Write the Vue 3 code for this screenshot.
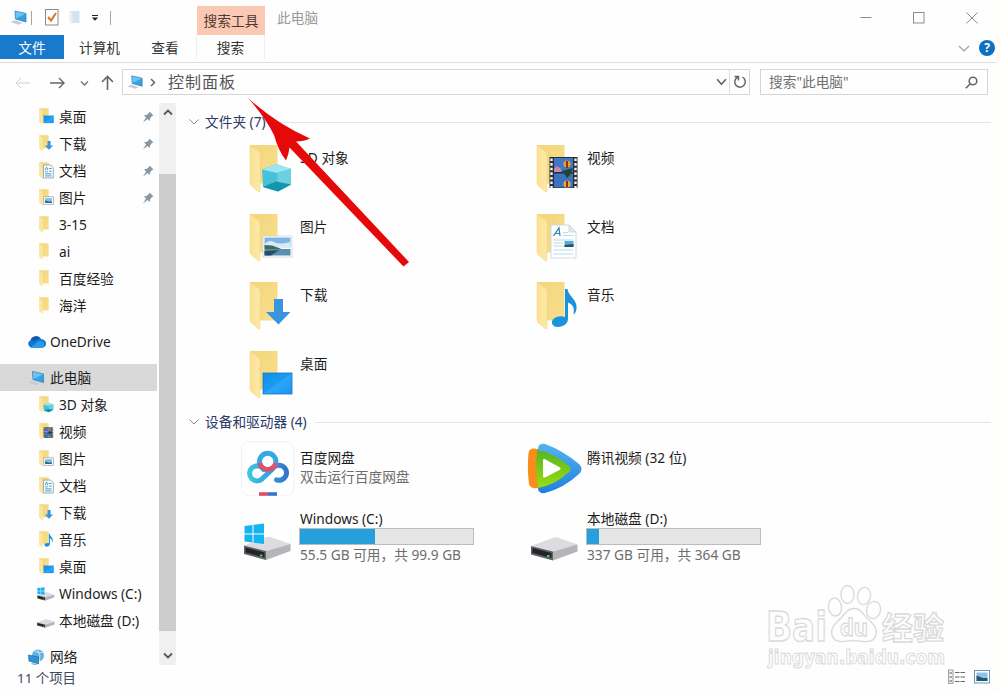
<template>
  <div class="explorer">
    <svg class="sprite" width="0" height="0">
      <defs>
        <linearGradient id="gFolder" x1="0" y1="0" x2="1" y2="1">
          <stop offset="0" stop-color="#f3d57c" />
          <stop offset="1" stop-color="#f8df8c" />
        </linearGradient>
        <linearGradient id="gFlap" x1="0" y1="0" x2="1" y2="0">
          <stop offset="0" stop-color="#fbe18f" />
          <stop offset="1" stop-color="#fdeaa9" />
        </linearGradient>
        <linearGradient id="gScreen" x1="0" y1="0" x2="1" y2="1">
          <stop offset="0" stop-color="#0f8fea" />
          <stop offset="0.5" stop-color="#1c9bf3" />
          <stop offset="0.52" stop-color="#2ba8fb" />
          <stop offset="1" stop-color="#1894f0" />
        </linearGradient>
        <linearGradient id="gDisk" gradientUnits="userSpaceOnUse" x1="9" y1="0" x2="45" y2="0">
          <stop offset="0" stop-color="#3fc4e2" />
          <stop offset="0.55" stop-color="#2f9fe2" />
          <stop offset="1" stop-color="#3276cf" />
        </linearGradient>
        <linearGradient id="gGreen" x1="0" y1="0" x2="0" y2="1">
          <stop offset="0" stop-color="#57b51f" />
          <stop offset="1" stop-color="#9bdc14" />
        </linearGradient>
        <linearGradient id="gBlue" x1="0" y1="0" x2="0" y2="1">
          <stop offset="0" stop-color="#55b4ec" />
          <stop offset="1" stop-color="#1f7fdf" />
        </linearGradient>
      </defs>

      <symbol id="folder" viewBox="0 0 44 50">
        <path d="M1 1H28.500V39.500H10z" fill="url(#gFolder)" />
        <path d="M1 1L9 7Q11 8.500 11 11V46.500Q11 49 9 47.500L2 41.500Q1 40.500 1 39z" fill="url(#gFlap)" stroke="#edd384" stroke-width="0.500" />
      </symbol>
      <symbol id="objects" viewBox="0 0 44 50">
        <use href="#folder" />
        <path d="M13 25.500L27 20L42 25V40.500L29 47.500L14 43z" fill="#45c1da" />
        <path d="M13 25.500L27 20L42 25L28 29z" fill="#9be6f0" />
        <path d="M28 29L42 25V40.500L29 47.500z" fill="#6ccfe2" />
        <path d="M14 43L27 37.500L42 40.500L29 47.500z" fill="#1594ae" />
      </symbol>
      <symbol id="pictures" viewBox="0 0 44 50">
        <use href="#folder" />
        <rect x="14" y="23" width="29" height="21" fill="#fff" stroke="#c4cfd6" stroke-width="0.700" />
        <rect x="15.500" y="24.500" width="26" height="10" fill="#7fb5e6" />
        <path d="M15.500 31Q20 26 25 29T41.500 29V35H15.500z" fill="#d9eaf6" />
        <path d="M15.500 32L23 32.500L34 36.500H15.500z" fill="#3d6b55" />
        <rect x="15.500" y="36" width="26" height="6.500" fill="#5b8fb0" />
        <path d="M15.500 38L30 37L22 42.500H15.500z" fill="#254f64" />
      </symbol>
      <symbol id="downloads" viewBox="0 0 44 50">
        <use href="#folder" />
        <path d="M25 18H34V31H41.500L29.500 43.500L17 31H25z" fill="#3a94df" />
      </symbol>
      <symbol id="desktop" viewBox="0 0 44 50">
        <use href="#folder" />
        <rect x="14" y="23" width="29" height="21" fill="url(#gScreen)" stroke="#1477c4" stroke-width="0.800" />
      </symbol>
      <symbol id="music" viewBox="0 0 44 50">
        <use href="#folder" />
        <path d="M29 8H31.500C32 15 42 19 40.500 28C40 31 39 32.500 37.500 33.500C39 26 36 23 32 21.500V38C32 43 26.500 46 21.500 46C16 45.500 14 41 18 37.500C21 35 26 34.500 29 36z" fill="#1a93dc" />
      </symbol>
      <symbol id="videos" viewBox="0 0 44 50">
        <use href="#folder" />
        <rect x="13.500" y="13" width="28" height="31" fill="#2c2d32" />
        <rect x="18" y="14" width="19" height="14" fill="#3f78c6" />
        <rect x="18" y="29.500" width="19" height="14" fill="#3a72c2" />
        <path d="M18 25Q21 20 25 25V28H18z" fill="#c98aa4" />
        <circle cx="31" cy="20" r="3.600" fill="#d9a62c" />
        <path d="M30 17h2v7h-2z" fill="#a32720" />
        <circle cx="31" cy="40" r="3.600" fill="#e0b030" />
        <path d="M30 37h2v6h-2z" fill="#a32720" />
        <path d="M26 27L37 24L34 31L31 34L28 29z" fill="#23452b" />
        <path d="M15.500 14.500V44M39.500 14.500V44" stroke="#f3f3f3" stroke-width="2.400" stroke-dasharray="2.600 2" />
      </symbol>
      <symbol id="documents" viewBox="0 0 44 50">
        <use href="#folder" />
        <path d="M15 12H33L40 19V45H15z" fill="#fbfdfe" stroke="#ccd5d9" stroke-width="0.800" />
        <path d="M33 12V19H40z" fill="#e3eaee" stroke="#bfc9ce" stroke-width="0.600" />
        <path d="M17.500 23L23 15L24 23M19.500 20.500H23.500" fill="none" stroke="#2c7fae" stroke-width="1.200" />
        <path d="M27 19.500H32M27 22.500H37M17.500 27H37M17.500 30H27M17.500 33H27M17.500 37H37M17.500 41H37" stroke="#b9d8e6" stroke-width="0.900" />
        <rect x="28.500" y="28" width="9" height="6" fill="#5aaad6" />
        <path d="M28.500 34V32L37.500 31V34z" fill="#28526b" />
      </symbol>
      <symbol id="documents-s" viewBox="0 0 44 50">
        <use href="#folder" />
        <path d="M13 9H34L42 17V47H13z" fill="#fff" stroke="#7f99a5" stroke-width="2.400" />
        <path d="M18 24L22 15L26 24M29 19H37M18 29H26M30 27H37M18 35H37M18 41H37" fill="none" stroke="#3596bd" stroke-width="2.800" />
      </symbol>
      <symbol id="pictures-s" viewBox="0 0 44 50">
        <use href="#folder" />
        <rect x="14" y="23" width="28" height="22" fill="#fff" stroke="#8b9ca8" stroke-width="2" />
        <rect x="18" y="27" width="20" height="14" fill="#82bbe9" />
        <path d="M18 33L28 37H38V41H18z" fill="#2d6487" />
      </symbol>

      <symbol id="pc" viewBox="0 0 18 16">
        <path d="M5 1.500L16 4V12.500L5.500 9.500z" fill="#37a1e2" stroke="#2679b4" stroke-width="0.700" />
        <path d="M5.500 2L15.500 4.300L6 9z" fill="#6fc3f1" />
        <path d="M0.500 12.500L4.500 10.800L12.500 13.500L8.500 15.200z" fill="#c3ccd3" />
      </symbol>
      <symbol id="drive" viewBox="0 0 48 24">
        <path d="M0 9L23 0.500Q25 0 27 0.700L46.500 7.500L22 14.500z" fill="#dcdce0" />
        <path d="M22 14.500L46.500 7.500V14.500L22 23.500z" fill="#b4b4b9" />
        <path d="M0 9L22 14.500V23.500L0 17.500z" fill="#606165" />
        <path d="M1.500 11L20.500 16V21L1.500 16z" fill="#222428" />
        <rect x="16" y="18" width="2.500" height="2" fill="#3bd14a" />
      </symbol>
      <symbol id="windrive" viewBox="0 0 48 38">
        <use href="#drive" y="13.500" width="48" height="24" />
        <path d="M0.500 3L8.500 2V10.500H0.500zM9.500 1.800L20 0.500V10.500H9.500zM0.500 11.500H8.500V19.500L0.500 18.500zM9.500 11.500H20V21L9.500 19.600z" fill="#14b4ee" />
      </symbol>
      <symbol id="cloud" viewBox="0 0 18 13">
        <path d="M4 12A4 4 0 0 1 3.500 4.500A5.500 5.500 0 0 1 13.500 4A4 4 0 0 1 14.500 12z" fill="#1277d2" />
        <path d="M3 12L10 6.500Q12 5 15 6A3.500 3.500 0 0 1 14.500 12z" fill="#2a9bea" />
        <path d="M3.500 4.500A5.500 5.500 0 0 1 12.500 2.700L6.500 6z" fill="#0b5cad" />
      </symbol>
      <symbol id="network" viewBox="0 0 18 16">
        <circle cx="10.500" cy="6.500" r="6" fill="#5fb0dd" />
        <path d="M7 2Q12 5 15.500 3M10 0.500Q14 6 12 12" stroke="#c9e6f5" fill="none" />
        <path d="M1 6L11 8V15L1.500 12z" fill="#2f93d8" stroke="#236fa6" stroke-width="0.700" />
        <path d="M4 14.500L9 15.800" stroke="#8fa1ad" stroke-width="1.200" />
      </symbol>
      <symbol id="netdisk" viewBox="0 0 54 55">
        <rect x="0.500" y="0.800" width="52.500" height="54" rx="8" fill="#fff" stroke="#f0f2f3" />
        <g fill="none" stroke-width="5" stroke-linecap="round">
          <path d="M35.500 38.800A7.500 7.500 0 1 0 31.500 28L22 37A7.500 7.500 0 1 1 22.500 28.500" stroke="url(#gDisk)" />
          <circle cx="26.700" cy="20.500" r="8.200" stroke="#35a9e6" />
          <path d="M18.700 22A8.200 8.200 0 0 0 34.700 22" stroke="#e0506f" stroke-linecap="butt" />
        </g>
        <path d="M18 51.200H27V54.800H18z" fill="#dc4f68" />
        <path d="M27 51.200H36V54.800H27z" fill="#3576cf" />
      </symbol>
      <symbol id="tencent" viewBox="0 0 55 52">
        <path d="M11 5Q12 0 18 1Q35 7 52 21Q57 26 52 31Q37 45 18 50Q12 51 11 46z" fill="url(#gBlue)" />
        <path d="M11 6Q2 4 1.500 10Q0 26 2 41Q3 46 11 45z" fill="#f98d1c" />
        <path d="M10 7Q25 9 42 23Q45 26 42 29Q28 42 11 45Q8 26 10 7z" fill="url(#gGreen)" />
        <path d="M16 17.500Q16 15.500 18 16.300L33 24.500Q34.500 25.700 33 26.800L18 34.500Q16 35 16 33z" fill="#fff" />
      </symbol>
      <symbol id="pin" viewBox="0 0 12 12">
        <path d="M7.500 0.500L11.500 4.500L10 5L8 7.500L8 10L5.500 8L1 11.500L4 6.500L2 4L4.500 4L7 2z" fill="#8797a3" />
      </symbol>
    </svg>

    <header class="titlebar">
      <svg class="ic-app"><use href="#pc" /></svg>
      <i class="sep"></i>
      <svg class="ic-check" viewBox="0 0 14 17">
        <rect x="0.500" y="0.500" width="12.500" height="15.500" fill="#fff" stroke="#8a8a8a" />
        <path d="M3 8L6 11.500L11 4" fill="none" stroke="#e0702e" stroke-width="2" />
      </svg>
      <svg class="ic-new" viewBox="0 0 11 15">
        <path d="M1 1H10.500V13H3z" fill="#d3e3f2" />
        <path d="M0.500 1L3.500 3V14.500L0.500 12z" fill="#e5f0f9" />
      </svg>
      <svg class="ic-more" viewBox="0 0 8 6">
        <path d="M1 0.500H7" stroke="#222" />
        <path d="M0.800 2.500H7.200L4 5.700z" fill="#222" />
      </svg>
      <i class="sep last"></i>
      <div class="tool-tab">搜索工具</div>
      <div class="window-title">此电脑</div>
      <div class="controls">
        <svg viewBox="0 0 12 12"><path d="M0.500 5.500H11.500" /></svg>
        <svg viewBox="0 0 12 12"><rect x="0.500" y="0.500" width="10.500" height="10.500" /></svg>
        <svg viewBox="0 0 12 12"><path d="M0.500 0.500L11.500 11.500M11.500 0.500L0.500 11.500" /></svg>
      </div>
    </header>

    <nav class="ribbon">
      <div class="tab file">文件</div>
      <div class="tab computer">计算机</div>
      <div class="tab view">查看</div>
      <div class="tab search">搜索</div>
      <svg class="collapse" viewBox="0 0 12 7"><path d="M1 1L6 6L11 1" /></svg>
      <span class="help">?</span>
    </nav>

    <div class="address-row">
      <svg class="nav-icons" viewBox="0 0 104 20">
        <path d="M2 10H16M7 5L2 10L7 15" stroke="#cfcfcf" />
        <path d="M36 10H50M45 5L50 10L45 15" stroke="#666" stroke-width="1.400" />
        <path d="M67 8.500L70.500 12L74 8.500" stroke="#777" stroke-width="1.500" />
        <path d="M93.500 17V4M88 9L93.500 3.500L99 9" stroke="#666" stroke-width="1.600" />
      </svg>
      <div class="address">
        <svg class="ic-addr"><use href="#pc" /></svg>
        <svg class="crumb" viewBox="0 0 6 9"><path d="M1 1L4.500 4.500L1 8" /></svg>
        <span class="path">控制面板</span>
        <svg class="drop" viewBox="0 0 10 7"><path d="M1 1L5 5.500L9 1" /></svg>
        <div class="refresh">
          <svg viewBox="0 0 14 14"><path d="M5 2A5.300 5.300 0 1 0 9.500 2.200M1.500 1.500H5.500V5.500" /></svg>
        </div>
      </div>
      <div class="search-box">
        <span>搜索"此电脑"</span>
        <svg viewBox="0 0 13 13"><circle cx="8" cy="5" r="3.800" /><path d="M5.300 7.700L0.800 12.200" /></svg>
      </div>
    </div>

    <div class="body">
      <aside class="tree">
        <div
          v-for="(node, i) in tree"
          :key="i"
          class="node"
          :class="{ root: node.root, active: node.active, space: node.space }"
        >
          <svg :class="['node-icon', node.icon]"><use :href="'#' + node.icon" /></svg>
          <span class="node-name">{{ node.name }}</span>
          <svg v-if="node.pinned" class="node-pin"><use href="#pin" /></svg>
        </div>
        <div class="status">11 个项目</div>
      </aside>

      <div class="scrollbar">
        <div class="scroll-btn"><svg viewBox="0 0 10 7"><path d="M1 5.500L5 1.500L9 5.500" /></svg></div>
        <div class="thumb"></div>
        <div class="scroll-btn down"><svg viewBox="0 0 10 7"><path d="M1 1.500L5 5.500L9 1.500" /></svg></div>
      </div>

      <main class="content">
        <div class="group">
          <svg viewBox="0 0 10 6"><path d="M0.500 0.500L5 5L9.500 0.500" /></svg>
          <span>文件夹 (7)</span>
          <hr />
        </div>
        <div class="folders">
          <div v-for="f in folders" :key="f.name" class="folder">
            <svg><use :href="'#' + f.icon" /></svg>
            <span>{{ f.name }}</span>
          </div>
        </div>

        <div class="group">
          <svg viewBox="0 0 10 6"><path d="M0.500 0.500L5 5L9.500 0.500" /></svg>
          <span>设备和驱动器 (4)</span>
          <hr />
        </div>
        <div class="devices">
          <div v-for="d in devices" :key="d.name" class="device" :class="{ disk: d.used }">
            <div class="device-pic">
              <svg :class="d.icon"><use :href="'#' + d.icon" /></svg>
            </div>
            <div class="device-info">
              <div class="device-name">{{ d.name }}</div>
              <div v-if="d.used" class="bar">
                <div class="fill" :style="{ width: d.used + '%' }"></div>
              </div>
              <div class="device-note">{{ d.note }}</div>
            </div>
          </div>
        </div>
      </main>
    </div>

    <svg class="view-icons" viewBox="0 0 44 16">
      <rect x="0.500" y="1" width="4.500" height="13.500" fill="#f2f2f2" stroke="#8b8b8b" stroke-width="0.800" />
      <path d="M1.500 4H4M1.500 8H4M1.500 12H4" stroke="#555" />
      <path d="M7 3.500H17M7 8H17M7 12.500H17" stroke="#666" stroke-dasharray="4.500 1" />
      <rect x="26.500" y="1.500" width="15" height="12.500" fill="#fff" stroke="#6f96ad" />
      <rect x="28.500" y="3.500" width="11" height="8.500" fill="#8dc3e8" />
      <path d="M28.500 6.500L35 9H39.500V12H28.500z" fill="#1f5a72" />
    </svg>

    <svg class="watermark" viewBox="0 0 190 92">
      <g class="paw">
        <ellipse cx="70" cy="27" rx="6.500" ry="9" transform="rotate(-8 70 27)" />
        <ellipse cx="82.500" cy="14.500" rx="6.500" ry="9" />
        <ellipse cx="99" cy="16" rx="6.500" ry="8.700" transform="rotate(10 99 16)" />
        <ellipse cx="108.500" cy="30" rx="7" ry="8.700" transform="rotate(12 108.500 30)" />
        <path d="M89 28.500C97 28.500 98 36 106 42C114 49 113 60 103 61.500C97 62 95 60.500 89 60.500C83 60.500 80 62 75 61.500C65 60 64 49 72 42C79 36 81 28.500 89 28.500z" />
      </g>
      <text x="1" y="61" class="bai" textLength="61" lengthAdjust="spacingAndGlyphs">Bai</text>
      <text x="75" y="56" class="du" textLength="28" lengthAdjust="spacingAndGlyphs">du</text>
      <text x="117" y="59" class="cn" textLength="62" lengthAdjust="spacingAndGlyphs">经验</text>
      <text x="3" y="84" class="site" textLength="177" lengthAdjust="spacingAndGlyphs">jingyan.baidu.com</text>
    </svg>

    <svg class="arrow" viewBox="0 0 164 172">
      <path d="M1 1Q30 27 63 41.500Q57 44.500 49 44.500L162 165L156.500 169.500L42.500 50.500Q42 57 39 63.500Q31 53 27 38Q18 20 1 1z" fill="#e60909" />
    </svg>
  </div>
</template>

<script setup>
const tree = [
  { name: '桌面', icon: 'desktop', pinned: true },
  { name: '下载', icon: 'downloads', pinned: true },
  { name: '文档', icon: 'documents-s', pinned: true },
  { name: '图片', icon: 'pictures-s', pinned: true },
  { name: '3-15', icon: 'folder' },
  { name: 'ai', icon: 'folder' },
  { name: '百度经验', icon: 'folder' },
  { name: '海洋', icon: 'folder' },
  { name: 'OneDrive', icon: 'cloud', root: true, space: true },
  { name: '此电脑', icon: 'pc', root: true, space: true, active: true },
  { name: '3D 对象', icon: 'objects' },
  { name: '视频', icon: 'videos' },
  { name: '图片', icon: 'pictures-s' },
  { name: '文档', icon: 'documents-s' },
  { name: '下载', icon: 'downloads' },
  { name: '音乐', icon: 'music' },
  { name: '桌面', icon: 'desktop' },
  { name: 'Windows (C:)', icon: 'windrive' },
  { name: '本地磁盘 (D:)', icon: 'drive' },
  { name: '网络', icon: 'network', root: true, space: true }
];

const folders = [
  { name: '3D 对象', icon: 'objects' },
  { name: '视频', icon: 'videos' },
  { name: '图片', icon: 'pictures' },
  { name: '文档', icon: 'documents' },
  { name: '下载', icon: 'downloads' },
  { name: '音乐', icon: 'music' },
  { name: '桌面', icon: 'desktop' }
];

const devices = [
  { name: '百度网盘', icon: 'netdisk', note: '双击运行百度网盘' },
  { name: '腾讯视频 (32 位)', icon: 'tencent', note: '' },
  { name: 'Windows (C:)', icon: 'windrive', note: '55.5 GB 可用，共 99.9 GB', used: 43.5 },
  { name: '本地磁盘 (D:)', icon: 'drive', note: '337 GB 可用，共 364 GB', used: 7 }
];
</script>

<style>
body {
  background: #fefefe;
  overflow: hidden;
}
</style>

<style scoped>
.explorer {
  position: relative;
  width: 1000px;
  height: 692px;
  box-sizing: border-box;
  overflow: hidden;
  background: #fefefe;
  border-right: 4px solid #fffdf6;
  font-family: "Noto Sans", "Noto Sans CJK SC", sans-serif;
  font-size: 13.7px;
  line-height: 20px;
  color: #1c1c1c;
  white-space: nowrap;
}

.sprite {
  position: absolute;
}

svg {
  flex: none;
}

/* title bar */
.titlebar {
  display: flex;
  align-items: center;
  height: 35px;
  box-sizing: border-box;
  padding-left: 10px;
}

.ic-app {
  width: 18px;
  height: 17px;
}

.sep {
  width: 1px;
  height: 14px;
  margin-left: 3px;
  background: #a5a5a5;
}

.sep.last {
  margin-left: 11px;
}

.ic-check {
  width: 14px;
  height: 17px;
  margin-left: 13px;
}

.ic-new {
  width: 11px;
  height: 15px;
  margin-left: 10px;
}

.ic-more {
  width: 8px;
  height: 6px;
  margin-left: 11px;
}

.tool-tab {
  width: 68px;
  height: 29px;
  margin: 5px 0 0 86px;
  line-height: 29px;
  text-align: center;
  background: #fbc9b3;
  color: #4b3a33;
}

.window-title {
  margin-left: 12px;
  color: #999;
}

.controls {
  display: flex;
  gap: 41px;
  margin-left: auto;
  margin-right: 18px;
}

.controls svg {
  width: 12px;
  height: 12px;
  fill: none;
  stroke: #8c8c8c;
}

/* ribbon */
.ribbon {
  display: flex;
  align-items: flex-start;
  height: 28px;
  box-sizing: border-box;
  border-bottom: 1px solid #dcdcdc;
}

.tab {
  height: 24px;
  line-height: 26px;
  text-align: center;
  color: #333;
}

.tab.file {
  width: 64px;
  background: #1979ca;
  color: #fff;
}

.tab.computer {
  width: 71px;
}

.tab.view {
  width: 60px;
}

.tab.search {
  width: 67px;
  margin-left: 1px;
  border: 1px solid #eee;
  border-width: 0 1px;
}

.collapse {
  width: 12px;
  height: 7px;
  margin: 10px 9px 0 auto;
  fill: none;
  stroke: #a0a0a0;
  stroke-width: 1.2;
}

.help {
  width: 16px;
  height: 16px;
  margin: 5px 1px 0 0;
  border-radius: 50%;
  background: #0f6fc0;
  color: #fff;
  font-size: 12px;
  font-weight: 700;
  line-height: 16px;
  text-align: center;
}

/* address row */
.address-row {
  display: flex;
  align-items: center;
  height: 40px;
  box-sizing: border-box;
  padding: 0 8px 2px 14px;
}

.nav-icons {
  width: 104px;
  height: 20px;
  margin-top: 2px;
  fill: none;
}

.address {
  display: flex;
  align-items: center;
  width: 628px;
  height: 26px;
  box-sizing: border-box;
  margin-left: 4px;
  padding-left: 4px;
  border: 1px solid #d6d6d6;
}

.ic-addr {
  width: 17px;
  height: 16px;
}

.crumb {
  width: 6px;
  height: 9px;
  margin-left: 6px;
}

.path {
  flex: 1;
  margin-left: 12px;
  font-size: 16px;
  letter-spacing: 1px;
  color: #555;
}

.drop {
  width: 11px;
  height: 8px;
  margin-right: 2px;
}

.refresh {
  display: flex;
  align-items: center;
  justify-content: center;
  width: 19px;
  height: 24px;
  border-left: 1px solid #ddd;
}

.refresh svg {
  width: 14px;
  height: 14px;
}

.crumb,
.drop,
.refresh svg {
  fill: none;
  stroke: #666;
  stroke-width: 1.5;
}

.search-box {
  display: flex;
  align-items: center;
  justify-content: space-between;
  flex: 1;
  height: 26px;
  box-sizing: border-box;
  margin-left: 10px;
  padding: 0 9px 0 8px;
  border: 1px solid #d6d6d6;
  color: #707070;
}

.search-box svg {
  width: 13px;
  height: 13px;
  fill: none;
  stroke: #666;
  stroke-width: 1.6;
}

/* tree */
.body {
  display: flex;
  height: 589px;
}

.tree {
  width: 159px;
}

.node {
  display: flex;
  align-items: center;
  width: 157px;
  height: 27px;
  box-sizing: border-box;
  padding-left: 39px;
}

.node.root {
  padding-left: 27px;
}

.node.space {
  margin-top: 9px;
}

.node.active {
  background: #d9d9d9;
}

.node-icon {
  width: 15px;
  height: 17px;
  margin-right: 5px;
}

.node-icon.cloud {
  width: 19px;
  height: 14px;
  margin-right: 4px;
}

.node-icon.pc,
.node-icon.network {
  width: 19px;
  height: 16px;
  margin-right: 4px;
}

.node-icon.windrive,
.node-icon.drive {
  width: 18px;
  height: 14px;
  margin-left: -2px;
  margin-right: 4px;
}

.node-icon.drive {
  height: 9px;
  margin-top: 5px;
}

.node-name {
  flex: 1;
}

.node-pin {
  width: 12px;
  height: 12px;
  margin-right: 3px;
}

.status {
  margin: -2px 0 0 17px;
  font-size: 13.4px;
  color: #3f4a5c;
}

/* scrollbar */
.scrollbar {
  display: flex;
  flex-direction: column;
  width: 17px;
  height: 562px;
  background: #f0f0f0;
}

.scroll-btn {
  display: flex;
  align-items: center;
  justify-content: center;
  height: 19px;
}

.scroll-btn svg {
  width: 10px;
  height: 7px;
  fill: none;
  stroke: #555;
  stroke-width: 1.8;
}

.thumb {
  height: 457px;
  margin-top: 52px;
  background: #cdcdcd;
}

.scroll-btn.down {
  margin-top: auto;
}

/* content */
.content {
  flex: 1;
  padding: 9px 5px 0 13px;
}

.group {
  display: flex;
  align-items: center;
  height: 20px;
  color: #2b3a66;
}

.group svg {
  width: 10px;
  height: 6px;
  margin-right: 6px;
  fill: none;
  stroke: #888;
}

.group hr {
  flex: 1;
  height: 1px;
  margin: 1px 0 0 8px;
  border: 0;
  background: #e4e4e6;
}

.folders {
  display: grid;
  grid-template-columns: repeat(2, 287px);
  grid-auto-rows: 68.5px;
  padding: 12px 0 0 60px;
  height: 268px;
}

.folder {
  display: flex;
}

.folder svg {
  width: 44px;
  height: 50px;
  margin-right: 7px;
}

.folder span {
  margin-top: 4px;
}

.devices {
  display: grid;
  grid-template-columns: repeat(2, 287px);
  grid-template-rows: 68px 60px;
  padding: 9px 0 0 52px;
}

.device {
  display: flex;
}

.device-pic {
  width: 59px;
}

.device-pic svg {
  display: block;
}

.device-pic .netdisk {
  width: 54px;
  height: 55px;
}

.device-pic .tencent {
  width: 55px;
  height: 52px;
  margin: 2px 0 0 -1px;
}

.device-pic .windrive {
  width: 48px;
  height: 38px;
  margin: 14px 0 0 3px;
}

.device-pic .drive {
  width: 48px;
  height: 24px;
  margin: 28px 0 0 3px;
}

.device-info {
  padding-top: 7px;
}

.device.disk .device-info {
  padding-top: 0;
}

.device-name {
  height: 19px;
}

.bar {
  width: 175px;
  height: 17px;
  box-sizing: border-box;
  margin: 0 0 0 -1px;
  border: 1px solid #bcbcbc;
  background: #e6e6e6;
}

.fill {
  height: 15px;
  background: #26a0da;
}

.device-note {
  color: #6d6d6d;
}

/* overlays */
.view-icons {
  position: absolute;
  left: 948px;
  top: 669px;
  width: 44px;
  height: 16px;
}

.watermark {
  position: absolute;
  left: 765px;
  top: 580px;
  width: 190px;
  height: 92px;
}

.paw ellipse,
.paw path {
  fill: #fefefe;
  stroke: #dadada;
  stroke-width: 1.4;
}

.watermark text {
  fill: #fefefe;
  stroke: #dadada;
  stroke-width: 1.3;
  font-weight: 700;
}

.watermark .bai {
  font-family: "DejaVu Sans", sans-serif;
  font-size: 40px;
}

.watermark .du {
  font-size: 24px;
}

.watermark .cn {
  font-size: 31px;
}

.watermark .site {
  font-family: "DejaVu Sans", sans-serif;
  font-size: 19px;
  stroke-width: 1;
}

.arrow {
  position: absolute;
  left: 247px;
  top: 97px;
  width: 164px;
  height: 172px;
}
</style>
